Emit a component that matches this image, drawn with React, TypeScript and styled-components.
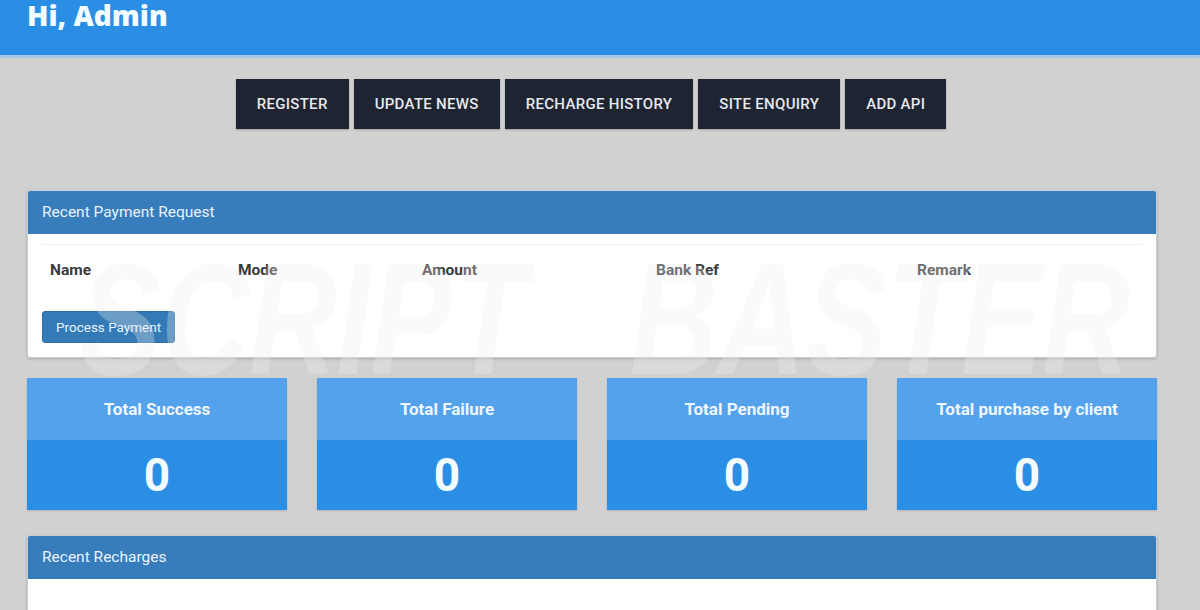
import React from 'react'
import styled, { createGlobalStyle } from 'styled-components'

const GlobalStyle = createGlobalStyle`
  html, body {
    margin: 0;
    padding: 0;
    background: #d1d1d1;
    font-family: Roboto, "Liberation Sans", Arial, sans-serif;
    overflow: hidden;
  }
`

const Page = styled.div`
  width: 1200px;
  height: 610px;
  overflow: hidden;
  background: #d1d1d1;
`

const TopBar = styled.header`
  height: 55px;
  background: #2b8ee5;
  border-bottom: 3px solid #a9c9ea;
  box-sizing: content-box;
  padding-left: 27px;

  h1 {
    margin: 0;
    font-family: "Open Sans", "Liberation Sans", sans-serif;
    font-weight: 800;
    font-size: 28px;
    line-height: 30px;
    color: #f2fbff;
  }
`

const Nav = styled.nav`
  display: flex;
  justify-content: center;
  gap: 5px;
  padding: 21px 18px 0 0;
  box-sizing: border-box;
  width: 1200px;
`

const NavButton = styled.button`
  height: 50px;
  padding: 0 21px;
  border: none;
  background: #1f2433;
  color: #e6e8ec;
  font-family: Roboto, "Liberation Sans", sans-serif;
  font-weight: 500;
  font-size: 15px;
  letter-spacing: 0.3px;
  text-transform: uppercase;
  box-shadow: 0 1px 2px rgba(0, 0, 0, 0.25);
`

const Content = styled.main`
  position: relative;
  width: 1130px;
  margin-left: 27px;
  padding-top: 61px;
  display: flex;
  flex-direction: column;
`

const Panel = styled.section`
  position: relative;
  z-index: 1;
  background: #fff;
  border: 1px solid #c4ccd6;
  border-radius: 3px;
  box-shadow: 0 1px 3px rgba(0, 0, 0, 0.2);
  overflow: hidden;
`

const PanelHead = styled.div`
  height: 43px;
  background: #377cbb;
  color: #e8f3ff;
  font-size: 15.5px;
  line-height: 43px;
  padding-left: 14px;
`

const PanelBody = styled.div`
  padding: 10px 14px 14px;
`

const Table = styled.div`
  border-top: 1px solid #eef2f5;
  display: grid;
  grid-template-columns: 188px 184px 234px 261px 1fr;
  padding: 16px 8px 32px;
  font-weight: 700;
  font-size: 15.5px;
  color: #3a3a3a;
`

const ActionButton = styled.button`
  display: block;
  height: 32px;
  padding: 0 13px;
  border: 1px solid #2e6da4;
  border-radius: 3px;
  background: #337ab7;
  color: #eaf4ff;
  font-family: Roboto, "Liberation Sans", sans-serif;
  font-size: 13.5px;
`

const Stats = styled.div`
  position: relative;
  z-index: 1;
  display: grid;
  grid-template-columns: repeat(4, 260px);
  justify-content: space-between;
  margin: 20px 0 25px;
`

const StatCard = styled.div`
  display: flex;
  flex-direction: column;
  box-shadow: 0 1px 2px rgba(0, 0, 0, 0.15);
`

const StatTitle = styled.div`
  height: 62px;
  background: #54a2ec;
  color: #eef7ff;
  font-weight: 700;
  font-size: 17px;
  display: flex;
  align-items: center;
  justify-content: center;
`

const StatValue = styled.div`
  height: 70px;
  background: #2b8ee5;
  color: #f2fbff;
  font-weight: 700;
  font-size: 46px;
  display: flex;
  align-items: center;
  justify-content: center;
`

const Watermark = styled.div`
  position: absolute;
  z-index: 2;
  left: 53px;
  top: 98px;
  display: flex;
  gap: 137px;
  font-family: "Liberation Sans", Arial, sans-serif;
  font-style: italic;
  font-weight: 700;
  font-size: 160px;
  line-height: 1.15;
  color: rgba(238, 238, 238, 0.3);
  pointer-events: none;
  white-space: nowrap;
  transform: scaleX(0.76);
  transform-origin: left top;
`

const columns = ['Name', 'Mode', 'Amount', 'Bank Ref', 'Remark']
const stats = ['Total Success', 'Total Failure', 'Total Pending', 'Total purchase by client']
const links = ['Register', 'Update News', 'Recharge History', 'Site Enquiry', 'Add API']

const App = () => {
  return (
    <Page>
      <GlobalStyle />
      <TopBar>
        <h1>Hi, Admin</h1>
      </TopBar>

      <Nav>
        {links.map((l) => (
          <NavButton key={l}>{l}</NavButton>
        ))}
      </Nav>

      <Content>
        <Panel>
          <PanelHead>Recent Payment Request</PanelHead>
          <PanelBody>
            <Table>
              {columns.map((c) => (
                <div key={c}>{c}</div>
              ))}
            </Table>
            <ActionButton>Process Payment</ActionButton>
          </PanelBody>
        </Panel>

        <Stats>
          {stats.map((s) => (
            <StatCard key={s}>
              <StatTitle>{s}</StatTitle>
              <StatValue>0</StatValue>
            </StatCard>
          ))}
        </Stats>

        <Panel>
          <PanelHead>Recent Recharges</PanelHead>
          <PanelBody style={{ height: 80 }} />
        </Panel>

        <Watermark aria-hidden>
          <span>SCRIPT</span>
          <span>BASTER</span>
        </Watermark>
      </Content>
    </Page>
  )
}

export default App
